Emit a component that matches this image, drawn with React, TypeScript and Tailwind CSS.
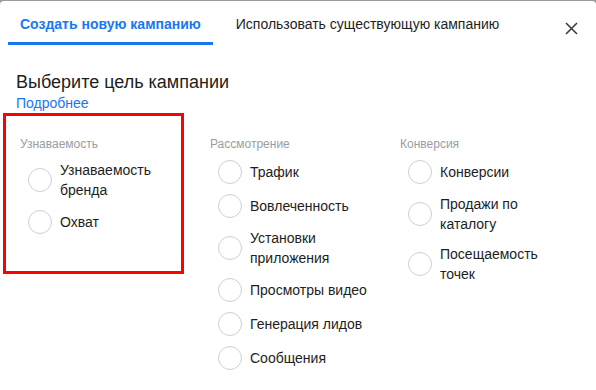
const groups = [
  {
    title: "Узнаваемость",
    items: ["Узнаваемость бренда", "Охват"],
  },
  {
    title: "Рассмотрение",
    items: [
      "Трафик",
      "Вовлеченность",
      "Установки приложения",
      "Просмотры видео",
      "Генерация лидов",
      "Сообщения",
    ],
  },
  {
    title: "Конверсия",
    items: ["Конверсии", "Продажи по каталогу", "Посещаемость точек"],
  },
];

function Radio({ label }: { label: string }) {
  return (
    <label className="flex items-center py-[5px] pl-2">
      <span className="h-6 w-6 shrink-0 rounded-full border border-[#ccd0d5] bg-white" />
      <span className="ml-2 w-[120px] text-[14px] leading-[20px] text-[#1c1e21]">{label}</span>
    </label>
  );
}

export default function App() {
  return (
    <div className="h-[390px] w-[596px] overflow-hidden bg-[#9b9b9b] pt-px font-['Liberation_Sans',Arial,sans-serif]">
      <div className="relative h-full rounded-t-[4px] bg-white">
        {/* Tabs */}
        <div className="flex items-start px-2">
          <button className="border-b-[3px] border-[#1877f2] px-3 pt-[14px] pb-[9px] text-[14px] leading-[18px] font-bold text-[#1877f2]">
            Создать новую кампанию
          </button>
          <button className="ml-[11px] px-3 pt-[14px] pb-[9px] text-[14px] leading-[18px] text-[#1c1e21]">
            Использовать существующую кампанию
          </button>
          <button className="ml-auto mt-[21px] mr-[10px]">
            <svg width="13" height="13" viewBox="0 0 13 13" className="block">
              <path d="M1 1 L12 12 M12 1 L1 12" stroke="#3a3b3c" strokeWidth="1.6" />
            </svg>
          </button>
        </div>

        {/* Heading */}
        <div className="px-4 pt-[26px]">
          <h2 className="text-[18px] leading-[22px] text-[#1c1e21]">Выберите цель кампании</h2>
          <a className="mt-px block text-[14px] leading-[18px] text-[#1877f2]">Подробнее</a>
        </div>

        {/* Objectives */}
        <div className="grid grid-cols-[190px_190px_190px] pt-[24px] pl-5">
          {groups.map((g) => (
            <div key={g.title}>
              <div className="mb-[3px] text-[12px] leading-[16px] text-[#9a9da3]">{g.title}</div>
              {g.items.map((it) => (
                <Radio key={it} label={it} />
              ))}
            </div>
          ))}
        </div>

        {/* annotation */}
        <div className="absolute top-[112px] left-[3px] h-[161px] w-[181px] border-[3px] border-[#ff0000]" />
      </div>
    </div>
  );
}
